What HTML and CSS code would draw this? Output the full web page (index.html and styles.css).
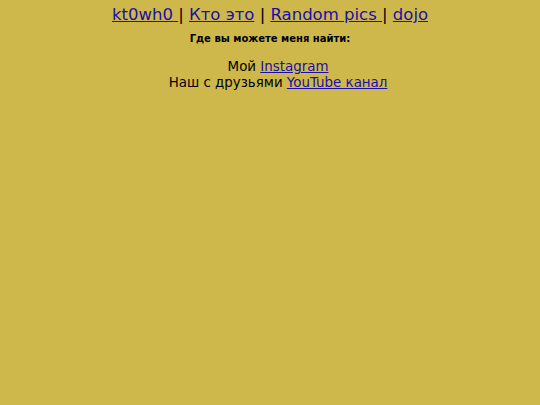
FILE: index.html
```html
<!DOCTYPE html>
<html lang="ru">
<head>
    <meta charset="UTF-8">
    <title>kt0wh0</title>
    <link rel="stylesheet" href="styles.css">
</head>
<body>
    <nav class="menu">
        <a href="#">kt0wh0 </a>| <a href="#">Кто это</a> | <a href="#">Random pics </a>| <a href="#">dojo</a>
    </nav>
    <h5 class="title">Где вы можете меня найти:</h5>
    <p class="links">
        Мой <a href="#">Instagram</a><br>
        Наш с друзьями <a href="#">YouTube канал</a>
    </p>
</body>
</html>
```
FILE: styles.css
```css
body {
    margin: 0;
    padding: 4px 8px;
    background-color: #ceb84b;
    color: #000;
    font-family: 'DejaVu Sans', Verdana, sans-serif;
    text-align: center;
}

a {
    color: #1a0dab;
}

.menu {
    font-size: 16.5px;
    line-height: 21px;
}

.title {
    font-size: 10px;
    margin: 8px 0 15px;
}

.links {
    font-size: 13.4px;
    line-height: 16px;
    margin: 0;
    padding-left: 16px;
}
```
